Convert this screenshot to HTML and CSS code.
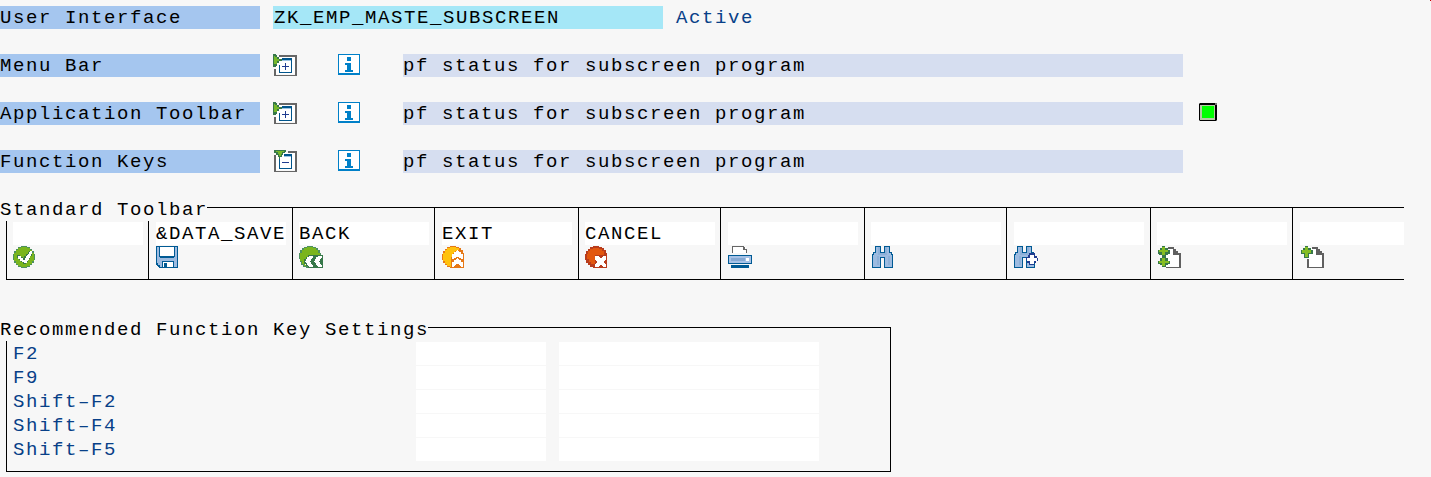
FILE: index.html
```
<!DOCTYPE html>
<html lang="en">
<head>
<meta charset="utf-8">
<title>Maintain User Interface</title>
<link rel="stylesheet" href="styles.css">
</head>
<body>
<svg class="defs" aria-hidden="true">
  <symbol id="info" viewBox="0 0 22 21">
    <path fill="#0080c8" d="M0 0h22v21H0z"/><path fill="#fff" d="M1 1h20v18H1z"/>
    <path fill="#0080c8" d="M9 3h4v4H9zM7 9h6v7h2v2H7v-2h2v-5H7z"/>
  </symbol>
  <symbol id="expand" viewBox="0 0 24 22">
    <path fill="#fff" d="M3 3h19v17H3z"/>
    <path fill="#666" d="M6 1h18v21H1v-7h2v6h19V3H6z"/>
    <path fill="#00558c" d="M9 4h10v15H6v-8h1v7h11V6H9z"/>
    <path fill="#9cc4e4" d="M9 6h9v1H9z"/>
    <path fill="#203c90" d="M12 9h1v3h3v1h-3v3h-1v-3H9v-1h3z"/>
    <path fill="#37784a" d="M0 0h3v1h1v2h2v2h3v2H6v2H4v3H3v1H0z"/>
    <path fill="#76b82a" d="M1 2h1v1h2v2h2v2H4v3H1z"/>
  </symbol>
  <symbol id="collapse" viewBox="0 0 24 22">
    <path fill="#fff" d="M3 3h19v17H3z"/>
    <path fill="#666" d="M15 1h9v21H1V5h2v16h19V3h-7z"/>
    <path fill="#00558c" d="M11 4h8v15H6V9h1v9h11V6h-7z"/>
    <path fill="#9cc4e4" d="M11 6h7v1h-7z"/>
    <path fill="#203c90" d="M9 12h7v1H9z"/>
    <path fill="#37784a" d="M1 0h12v2h-1v1h-2v2H9v2H7v2H6V7H5V5H3V3H1z"/>
    <path fill="#76b82a" d="M3 1h8v1H9v2H8v2H6V4H5V2H3z"/>
  </symbol>
</svg>
<main class="screen">
  <i class="marker"></i>
  <section class="head">
    <div class="row"><span class="label">User Interface</span><span class="name">ZK_EMP_MASTE_SUBSCREEN</span><span class="state">Active</span></div>
    <div class="row"><span class="label">Menu Bar</span><svg class="toggle"><use href="#expand"/></svg><svg class="info"><use href="#info"/></svg><span class="desc">pf status for subscreen program</span></div>
    <div class="row"><span class="label">Application Toolbar</span><svg class="toggle"><use href="#expand"/></svg><svg class="info"><use href="#info"/></svg><span class="desc">pf status for subscreen program</span>
      <svg class="light" viewBox="0 0 18 18"><path fill="#777" d="M0 0h18v18H0z"/><path d="M1 0h15v2h2v15h-1v1H1v-1H0V1h1z"/><path fill="#b4cba4" d="M1 2h15v15H1z"/><path fill="#0f0" d="M3 3h12v12H3z"/></svg></div>
    <div class="row"><span class="label">Function Keys</span><svg class="toggle"><use href="#collapse"/></svg><svg class="info"><use href="#info"/></svg><span class="desc">pf status for subscreen program</span></div>
  </section>

  <section class="group">
    <h2 class="legend legend-bar">Standard Toolbar</h2>
    <div class="toolbar">
      <div class="cell"><span class="code"></span>
        <svg class="ico" viewBox="0 0 24 22"><path fill="#4d9060" d="M8 0h6v1h3v2h2v2h2v3h1v6h-1v3h-2v2h-2v2h-3v1H8v-1H5v-2H3v-2H1v-3H0V8h1V5h2V3h2V1h3z"/><path fill="#7ab51d" d="M8 1h6v1h3v2h2v3h2v8h-2v3h-2v2h-3v1H8v-1H5v-2H3v-3H1V7h2V4h2V2h3z"/><path fill="#37784a" d="M16 5h3v5h-2v3h-2v3h-2v2h-3v-2H8v-2H6v-2H4V9h3v2h3v1h1v-2h2V8h2V6h1z"/><path fill="#fff" d="M17 5h2v3h-1v2h-1v2h-1v2h-1v1h-1v2h-3v-1H9v-1H7v-2H5v-3h3v2h2v2h2v-2h1v-2h1V9h1V8h1V6h1z"/></svg></div>
      <div class="cell"><span class="code">&amp;DATA_SAVE</span>
        <svg class="ico" viewBox="0 0 24 22"><path fill="#005a94" d="M0 0h22v22H3v-1H2v-1H1v-1H0z"/><path fill="#9dbbe0" d="M1 1h20v20H4v-2H2v-2H1z"/><path fill="#005a94" d="M3 0h16v11h-1v1H4v-1H3zM6 15h12v7H6z"/><path fill="#fff" d="M4 1h14v9H4zM7 16h10v5H7z"/><path fill="#005a94" d="M8 17h3v4H8z"/></svg></div>
      <div class="cell"><span class="code">BACK</span>
        <svg class="ico" viewBox="0 0 24 22"><path fill="#4d9060" d="M8 0h6v1h3v1h2v2h2v3h1v4H10v3H6v5h4v3H7v-1H4v-2H2v-3H1v-3H0V7h1V4h2V2h2V1h3z"/><path fill="#7ab51d" d="M8 1h6v1h3v2h2v3h2v3H10l-4 5v4h2v1H5v-2H3v-3H1V7h2V4h2V2h3z"/><path fill="#37784a" d="M9 9h15v13H9v-2H7v-2H5v-5h2v-2h2z"/><path fill="#fff" d="M10 10h4v2h-1v1h-1v2h-1v1h1v2h1v1h1v2h-4v-1H9v-1H8v-2H7v-1H6v-1h1v-2h1v-2h2zM19 10h4v2h-1v1h-1v2h-1v1h1v2h1v1h1v2h-4v-1h-1v-1h-1v-2h-1v-1h-1v-1h1v-2h1v-2h2z"/></svg></div>
      <div class="cell"><span class="code">EXIT</span>
        <svg class="ico" viewBox="0 0 24 22"><path fill="#e67817" d="M8 0h6v1h3v1h2v2h2v3h1v15H8v-1H5v-2H3v-2H1v-3H0V8h1V5h2V3h2V1h3z"/><path fill="#ffc20e" d="M8 1h6v1h3v2l-5 2-3 6v9H8v-1H5v-2H3v-3H1V7h2V4h2V2h3z"/><path fill="#fff" d="M15 4h1v1h1v1h2v2h2v5h-2v-1h-2v-1h-3v1h-2v1h-2V8h2V6h2V5h1zM15 12h1v1h1v1h2v2h2v5h-2v-1h-1v-1h-1v-1h-3v1h-1v1h-1v1h-2v-5h2v-2h2v-1h1z"/></svg></div>
      <div class="cell"><span class="code">CANCEL</span>
        <svg class="ico" viewBox="0 0 24 22"><path fill="#b83c1c" d="M8 0h6v1h3v1h2v2h2v3h1v15H8v-1H5v-2H3v-2H1v-3H0V8h1V5h2V3h2V1h3z"/><path fill="#e2570e" d="M8 2h6v1h3v2h2v4h-9v9H6v-2H4v-3H2V8h1V5h2V3h3z"/><path fill="#fff" d="M10 10h4v1h1v1h2v-1h1v-1h3v4h-1v1h-1v2h1v1h1v3h-3v-1h-1v-1h-2v1h-1v1h-4v-3h1v-1h1v-2h-1v-1h-1z"/></svg></div>
      <div class="cell"><span class="code"></span>
        <svg class="ico" viewBox="0 0 24 22"><path fill="#fff" d="M5 1h13v6H5z"/><path fill="#666" d="M4 0h12v1h1v2h2v4h-1V4h-3V1H5v6H4z"/><path fill="#005a94" d="M0 9h24v9H0zM3 19h18v3H3z"/><path fill="#a7c2e6" d="M1 10h22v7H1z"/><path fill="#86a9d3" d="M3 12h14v3H3z"/><path fill="#fff" d="M18 12h3v3h-3z"/></svg></div>
      <div class="cell"><span class="code"></span>
        <svg class="ico" viewBox="0 0 24 22"><g id="glass"><path fill="#005a94" d="M4 0h6v6h3V0h6v6h2v2h1v14H13V12h-3v10H1V8h1V6h2z"/><path fill="#9dbbe0" d="M5 1h4v6h5V1h4v6h2v2h1v12h-7V11H9v10H2V9h1V7h2z"/><path fill="#8db0d8" d="M7 1h2v6h5V1h2v8H7zM6 10h2v9H6zM17 10h2v9h-2z"/></g></svg></div>
      <div class="cell"><span class="code"></span>
        <svg class="ico" viewBox="0 0 24 22"><use href="#glass" x="-1"/><path fill="#203c90" d="M15 7h6v3h2v2h1v3h-2v2h-2v2h-5v-2h-2v-3h-1v-3h2V9h1z"/><path fill="#fff" d="M16 9h4v3h3v3h-3v3h-4v-3h-3v-3h3z"/></svg></div>
      <div class="cell"><span class="code"></span>
        <svg class="ico" viewBox="0 0 24 22"><path fill="#fff" d="M9 2h7v5h7v14H9z"/><path fill="#606060" d="M11 1h6v2h2v2h2v2h3v15H9v-1h13V9h-6V3h-5z"/><path fill="#37784a" d="M5 0h3v2h3v2h2v4h-2v1H9v3h2v3h2v3h-2v1H9v2H5v-2H3v-1H1v-3h2v-3h2V9H2V8H1V4h2V2h2z"/><path fill="#84bd22" d="M5 1h3v3h3v2H8v3H5V6H2V4h3zM5 12h3v3h4v2H8v3H5v-3H2v-2h3z"/></svg></div>
      <div class="cell"><span class="code"></span>
        <svg class="ico" viewBox="0 0 24 22"><path fill="#fff" d="M9 2h7v5h7v14H8v-9z"/><path fill="#606060" d="M12 1h6v2h2v2h2v2h2v15H7v-9h2v8h13V9h-6V3h-4z"/><path fill="#37784a" d="M5 0h3v2h3v2h2v4H9v4H4V8H1V4h2V2h2z"/><path fill="#84bd22" d="M5 1h3v3h3v3H8v4H5V7H2V4h3z"/></svg></div>
    </div>
  </section>

  <section class="group group-keys">
    <h2 class="legend legend-keys">Recommended Function Key Settings</h2>
    <div class="keys">
      <div class="key"><span>F2</span><b></b><b></b></div>
      <div class="key"><span>F9</span><b></b><b></b></div>
      <div class="key"><span>Shift–F2</span><b></b><b></b></div>
      <div class="key"><span>Shift–F4</span><b></b><b></b></div>
      <div class="key"><span>Shift–F5</span><b></b><b></b></div>
    </div>
  </section>
</main>
</body>
</html>
```
FILE: styles.css
```
* { box-sizing: border-box; }
body { margin: 0; background: #f7f7f7; color: #000; }
.defs { position: absolute; width: 0; height: 0; }
svg { display: block; shape-rendering: crispEdges; flex: none; }
.screen {
  position: relative;
  width: 1431px;
  height: 477px;
  padding-top: 6px;
  overflow: hidden;
  font: 19px/25px "Liberation Mono", "Courier New", monospace;
  letter-spacing: 1.6px;
}
.marker { position: absolute; top: 0; right: 0; width: 1px; height: 1px; background: #c00000; }

.head { display: flex; flex-direction: column; gap: 25px; height: 192px; }
.row { display: flex; height: 23px; white-space: nowrap; }
.label { width: 260px; margin-right: 13px; background: #a5c6ef; }
.name { width: 390px; padding-left: 1px; margin-right: 13px; background: #a5e7f7; }
.state { color: #084088; }
.toggle { width: 24px; height: 22px; margin-right: 41px; }
.info { width: 22px; height: 21px; margin-right: 43px; }
.desc { width: 780px; background: #d6def0; }
.light { width: 18px; height: 18px; margin: 1px 0 0 16px; }

.group { height: 120px; }
.group-keys { height: 154px; }
.legend {
  position: relative;
  z-index: 1;
  height: 23px;
  margin: 0 0 -14px;
  background: #f7f7f7;
  font: inherit;
  white-space: nowrap;
}
.legend-bar { width: 207px; }
.legend-keys { width: 428px; }

.toolbar {
  display: grid;
  grid-template-columns: 142px 144px 142px 144px 142px 144px 142px 144px 142px 112px;
  width: 1398px;
  height: 73px;
  margin-left: 6px;
  border: solid #000;
  border-width: 1px 0;
  overflow: hidden;
}
.cell { padding: 14px 0 0 6px; border-left: 1px solid #000; }
.cell:nth-child(even) { padding-left: 7px; }
.code { display: block; width: 130px; height: 23px; background: #fff; white-space: nowrap; }
.ico { width: 24px; height: 22px; margin-top: 1px; }

.keys {
  display: flex;
  flex-direction: column;
  gap: 1px;
  width: 885px;
  height: 145px;
  margin-left: 6px;
  padding: 14px 0 0 6px;
  border: 1px solid #000;
}
.key { display: grid; grid-template: 23px / 390px 130px 260px; gap: 13px; height: 23px; color: #084088; }
.key b { background: #fff; }
```
